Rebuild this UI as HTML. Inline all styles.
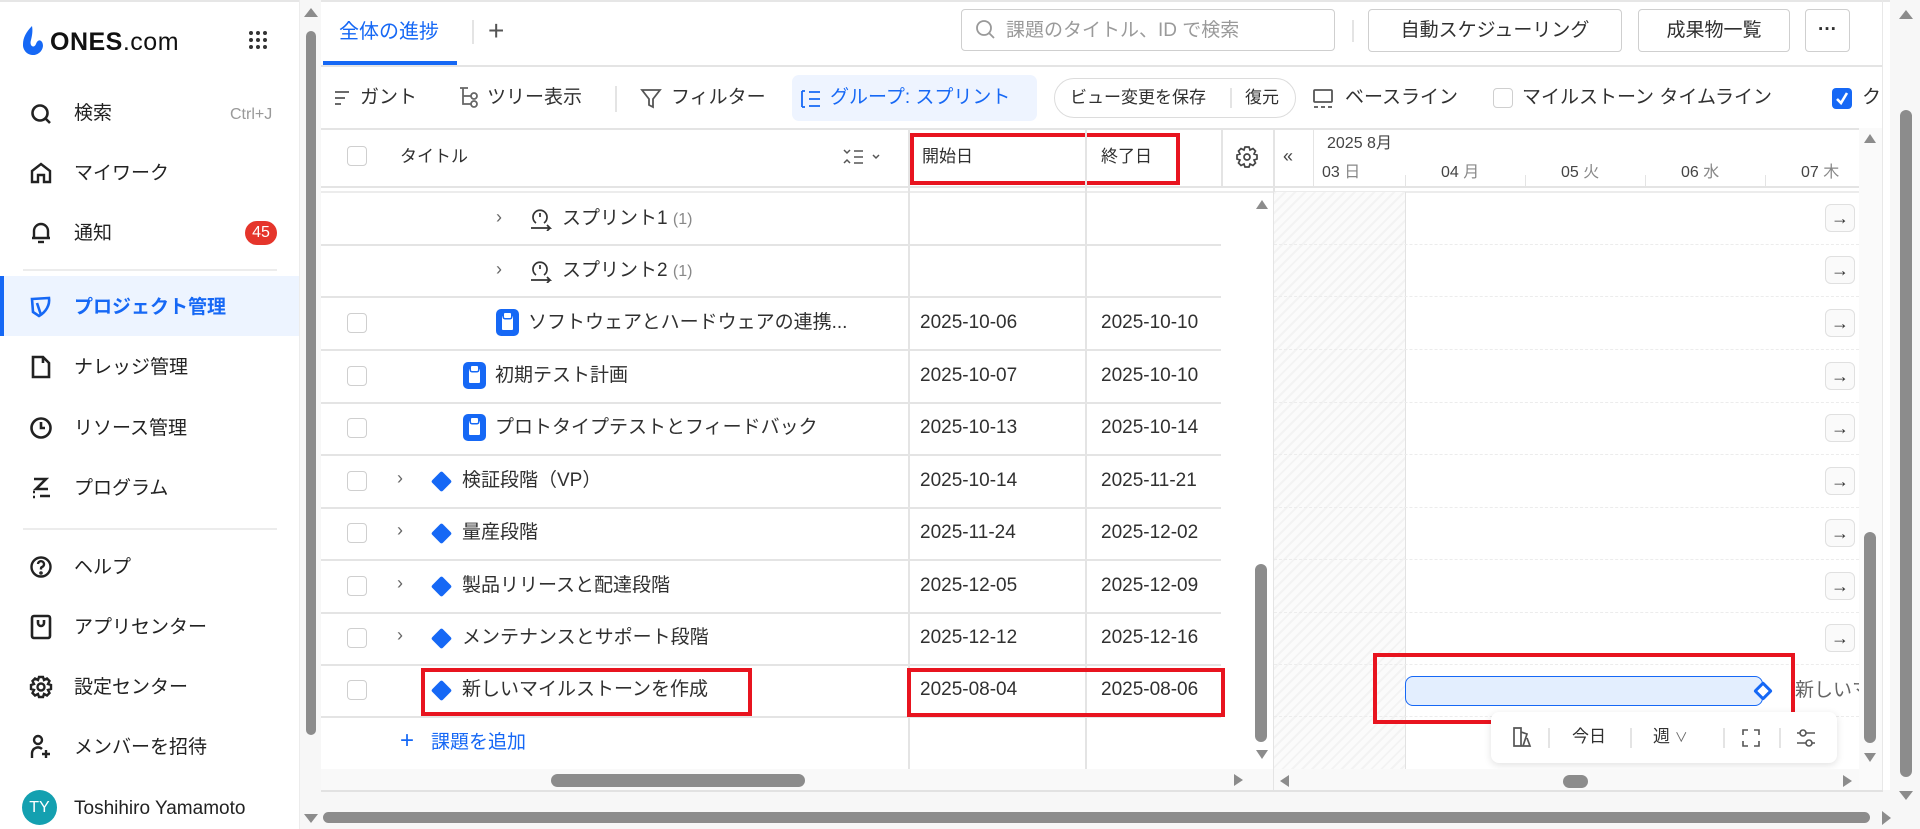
<!DOCTYPE html>
<html><head><meta charset="utf-8"><style>
*{box-sizing:border-box;margin:0;padding:0}
body{width:1920px;height:829px;overflow:hidden;background:#fff;font-family:"Liberation Sans","Noto Sans CJK JP",sans-serif;color:#303030;font-size:19px;position:relative}
.a{position:absolute;white-space:nowrap}
.t{line-height:1.2}
.cb{position:absolute;width:20px;height:20px;border:1.5px solid #cfcfcf;border-radius:4px;background:#fff}
.hl{position:absolute;height:1.5px;background:#e4e4e4}
.vl{position:absolute;width:1.5px;background:#e4e4e4}
.red{position:absolute;border:4px solid #e8141f}
.dia{position:absolute;width:15px;height:15px;background:#1668f5;transform:rotate(45deg);border-radius:2px}
.arr{position:absolute;left:1825px;width:30px;height:28px;border:1px solid #e0e0e0;border-radius:6px;background:#fafafa;text-align:center;line-height:26px;font-size:18px;color:#333}
.side .a{font-size:19px;color:#222}
.doc{position:absolute;width:23px;height:27px;background:#1668f5;border-radius:5px}
.doc:after{content:"";position:absolute;left:6px;top:7px;width:11px;height:14px;background:#fff;border-radius:1px}
.doc:before{content:"";position:absolute;left:8px;top:4px;width:7px;height:5px;background:#fff;border-radius:1px;z-index:1;box-shadow:0 0 0 1.5px #1668f5}
</style></head><body>
<div class="hl" style="left:0;top:0;width:1920px;background:#e6e6e6"></div>
<!-- sidebar -->
<div class="side">
<svg class="a" style="left:22px;top:24px" width="24" height="32" viewBox="0 0 24 32"><path d="M10 2 C4 8 1 14 1 20 a10 10 0 0 0 20 2 C21 16 16 14 14 20 C12 25 7 22 9 16 C10 12 11 7 10 2Z" fill="#1668f5"/></svg>
<div class="a t" style="left:50px;top:27px;font-size:25px;font-weight:bold;color:#111;letter-spacing:0.5px">ONES<span style="font-weight:normal">.com</span></div>
<svg class="a" style="left:248px;top:30px" width="20" height="20"><g fill="#333"><circle cx="3" cy="3" r="2"/><circle cx="10" cy="3" r="2"/><circle cx="17" cy="3" r="2"/><circle cx="3" cy="10" r="2"/><circle cx="10" cy="10" r="2"/><circle cx="17" cy="10" r="2"/><circle cx="3" cy="17" r="2"/><circle cx="10" cy="17" r="2"/><circle cx="17" cy="17" r="2"/></g></svg>
<svg class="a" style="left:30px;top:103px" width="22" height="22" fill="none" stroke="#222" stroke-width="2.6"><circle cx="10" cy="10" r="7.5"/><path d="M15 15 L20 20"/></svg>
<div class="a t" style="left:74px;top:103px">検索</div>
<div class="a t" style="left:230px;top:105px;font-size:16px;color:#999">Ctrl+J</div>
<svg class="a" style="left:30px;top:162px" width="22" height="22" fill="none" stroke="#222" stroke-width="2.4"><path d="M2 20 V9 L11 2 L20 9 V20 H14 V13 H8 V20Z"/></svg>
<div class="a t" style="left:74px;top:163px">マイワーク</div>
<svg class="a" style="left:30px;top:221px" width="22" height="24" fill="none" stroke="#222" stroke-width="2.4"><path d="M4 17 V10 a7 7 0 0 1 14 0 V17 H2 H20"/><path d="M8 21 h6"/></svg>
<div class="a t" style="left:74px;top:223px">通知</div>
<div class="a" style="left:245px;top:221px;width:32px;height:24px;border-radius:12px;background:#e5352b;color:#fff;font-size:16px;text-align:center;line-height:24px">45</div>
<div class="hl" style="left:23px;top:269px;width:254px;background:#ececec"></div>
<div class="a" style="left:0;top:276px;width:300px;height:60px;background:#edf4ff"></div>
<div class="a" style="left:0;top:276px;width:4px;height:60px;background:#1668f5"></div>
<svg class="a" style="left:29px;top:295px" width="24" height="24" fill="none" stroke="#1668f5" stroke-width="2.6"><path d="M3 4 L20 3 C21 10 17 17 10 21 L4 17Z M8 8 L12 20"/></svg>
<div class="a t" style="left:74px;top:297px;color:#1668f5;font-weight:bold">プロジェクト管理</div>
<svg class="a" style="left:31px;top:355px" width="20" height="24" fill="none" stroke="#222" stroke-width="2.6"><path d="M2 2 H12 L18 8 V22 H2Z M12 2 V8"/></svg>
<div class="a t" style="left:74px;top:357px">ナレッジ管理</div>
<svg class="a" style="left:29px;top:416px" width="24" height="24" fill="none" stroke="#222" stroke-width="2.6"><circle cx="12" cy="12" r="9.5"/><path d="M12 6 V12 H16"/></svg>
<div class="a t" style="left:74px;top:418px">リソース管理</div>
<svg class="a" style="left:30px;top:476px" width="22" height="24" fill="none" stroke="#222" stroke-width="2.6"><path d="M4 3 H16 L6 13 H18 M10 20 H20 M3 21 h2 M3 16 l2 0"/></svg>
<div class="a t" style="left:74px;top:478px">プログラム</div>
<div class="hl" style="left:23px;top:528px;width:254px;background:#ececec"></div>
<svg class="a" style="left:29px;top:555px" width="24" height="24" fill="none" stroke="#222" stroke-width="2.4"><circle cx="12" cy="12" r="9.5"/><path d="M9 9 a3 3 0 1 1 4 3 c-1 .5 -1 1 -1 2.5"/><circle cx="12" cy="18" r=".6" fill="#222"/></svg>
<div class="a t" style="left:74px;top:557px">ヘルプ</div>
<svg class="a" style="left:30px;top:614px" width="22" height="26" fill="none" stroke="#222" stroke-width="2.6"><rect x="2" y="2" width="18" height="22" rx="2"/><path d="M8 6 v3 a3 3 0 0 0 6 0 v-3"/></svg>
<div class="a t" style="left:74px;top:617px">アプリセンター</div>
<svg class="a" style="left:29px;top:675px" width="24" height="24" fill="none" stroke="#222" stroke-width="2.4"><circle cx="12" cy="12" r="3.5"/><path d="M10 2 h4 l1 3 3-1.5 2.5 2.5-1.5 3 3 1v4l-3 1 1.5 3-2.5 2.5-3-1.5-1 3h-4l-1-3-3 1.5-2.5-2.5 1.5-3-3-1v-4l3-1-1.5-3 2.5-2.5 3 1.5z"/></svg>
<div class="a t" style="left:74px;top:677px">設定センター</div>
<svg class="a" style="left:30px;top:734px" width="22" height="26" fill="none" stroke="#222" stroke-width="2.4"><circle cx="8" cy="6" r="4"/><path d="M2 24 V19 a6 6 0 0 1 10 -4 M16 16 v8 M12 20 h8"/></svg>
<div class="a t" style="left:74px;top:737px">メンバーを招待</div>
<div class="a" style="left:22px;top:790px;width:35px;height:35px;border-radius:50%;background:#14a0b0;color:#fff;font-size:16px;text-align:center;line-height:35px">TY</div>
<div class="a t" style="left:74px;top:798px;font-size:19px">Toshihiro Yamamoto</div>
</div>
<div class="vl" style="left:299px;top:0;height:829px;background:#ececec"></div>
<!-- left page scroll -->
<div class="a" style="left:300px;top:0;width:21px;height:829px;background:#f7f7f7"></div>
<div class="a" style="left:306px;top:31px;width:10px;height:704px;border-radius:5px;background:#8c8c8c"></div>
<div class="a" style="left:304px;top:8px;width:0;height:0;border-left:7px solid transparent;border-right:7px solid transparent;border-bottom:9px solid #8c8c8c"></div>
<div class="a" style="left:304px;top:814px;width:0;height:0;border-left:7px solid transparent;border-right:7px solid transparent;border-top:9px solid #8c8c8c"></div>
<!-- tabs -->
<div class="a t" style="left:339px;top:20px;color:#1668f5;font-size:20px">全体の進捗</div>
<div class="a" style="left:323px;top:61px;width:134px;height:4px;background:#1668f5"></div>
<div class="vl" style="left:472px;top:20px;height:24px"></div>
<div class="a" style="left:488px;top:14px;font-size:28px;color:#555;font-weight:300;line-height:1.2">+</div>
<div class="hl" style="left:321px;top:65px;width:1562px"></div>
<div class="a" style="left:961px;top:9px;width:374px;height:42px;border:1.5px solid #cfcfcf;border-radius:4px"></div>
<svg class="a" style="left:975px;top:19px" width="22" height="22" fill="none" stroke="#999" stroke-width="1.8"><circle cx="9" cy="9" r="7"/><path d="M14 14 l5 5"/></svg>
<div class="a t" style="left:1006px;top:20px;color:#9a9a9a">課題のタイトル、ID で検索</div>
<div class="vl" style="left:1352px;top:20px;height:22px"></div>
<div class="a" style="left:1368px;top:9px;width:254px;height:43px;border:1.5px solid #cfcfcf;border-radius:4px;text-align:center;line-height:42px">自動スケジューリング</div>
<div class="a" style="left:1638px;top:9px;width:152px;height:43px;border:1.5px solid #cfcfcf;border-radius:4px;text-align:center;line-height:42px">成果物一覧</div>
<div class="a" style="left:1805px;top:9px;width:45px;height:43px;border:1.5px solid #cfcfcf;border-radius:4px;text-align:center;line-height:40px;font-weight:bold">···</div>
<!-- toolbar -->
<svg class="a" style="left:333px;top:89px" width="18" height="18" stroke="#555" stroke-width="1.8"><path d="M2 3 h14 M2 9 h10 M2 15 h6"/></svg>
<div class="a t" style="left:360px;top:87px">ガント</div>
<svg class="a" style="left:458px;top:86px" width="24" height="24" fill="none" stroke="#666" stroke-width="1.8"><path d="M2 2 h8 M5 2 v16 h8 M5 10 h8"/><circle cx="16" cy="10" r="3"/><circle cx="16" cy="18" r="3"/></svg>
<div class="a t" style="left:487px;top:87px">ツリー表示</div>
<div class="vl" style="left:615px;top:86px;height:26px"></div>
<svg class="a" style="left:640px;top:88px" width="22" height="22" fill="none" stroke="#555" stroke-width="1.8"><path d="M2 2 H20 L13 11 V19 L9 17 V11Z"/></svg>
<div class="a t" style="left:671px;top:87px">フィルター</div>
<div class="a" style="left:792px;top:75px;width:245px;height:46px;background:#eef4ff;border-radius:7px"></div>
<svg class="a" style="left:800px;top:89px" width="22" height="20" fill="none" stroke="#1668f5" stroke-width="1.8"><path d="M2 2 v16 M2 2 h3 M2 18 h3 M9 3 h11 M9 10 h11 M9 17 h11"/></svg>
<div class="a t" style="left:830px;top:87px;color:#1668f5">グループ: スプリント</div>
<div class="a" style="left:1054px;top:78px;width:242px;height:40px;border:1.5px solid #dcdcdc;border-radius:20px"></div>
<div class="a t" style="left:1070px;top:88px;font-size:17px">ビュー変更を保存</div>
<div class="vl" style="left:1230px;top:88px;height:20px"></div>
<div class="a t" style="left:1245px;top:88px;font-size:17px">復元</div>
<svg class="a" style="left:1312px;top:88px" width="22" height="22" fill="none" stroke="#555" stroke-width="1.8"><rect x="2" y="2" width="18" height="12" rx="1"/><path d="M2 19 h4 M9 19 h4 M16 19 h4"/></svg>
<div class="a t" style="left:1345px;top:87px">ベースライン</div>
<div class="cb" style="left:1493px;top:88px"></div>
<div class="a t" style="left:1522px;top:87px">マイルストーン タイムライン</div>
<div class="a" style="left:1832px;top:88px;width:20px;height:21px;background:#1668f5;border-radius:4px"></div>
<svg class="a" style="left:1835px;top:91px" width="14" height="15" fill="none" stroke="#fff" stroke-width="2.6"><path d="M2 8 L6 12 L12 2"/></svg>
<div class="a t" style="left:1862px;top:87px">ク</div>
<div class="hl" style="left:321px;top:128px;width:1562px"></div>
<!-- header -->
<div class="cb" style="left:347px;top:146px"></div>
<div class="a t" style="left:400px;top:147px;font-size:17px">タイトル</div>
<svg class="a" style="left:843px;top:148px" width="44" height="18" fill="none" stroke="#555" stroke-width="1.5"><path d="M1 2 l3 3 3-3 M1 15 l3-3 3 3 M11 3 h9 M11 9 h9 M11 15 h9 M30 7 l3 3 3-3"/></svg>
<div class="a t" style="left:922px;top:147px;font-size:17px">開始日</div>
<div class="a t" style="left:1101px;top:147px;font-size:17px">終了日</div>
<svg class="a" style="left:1236px;top:146px" width="22" height="22" fill="none" stroke="#444" stroke-width="1.7"><circle cx="11" cy="11" r="3"/><path d="M9 1 h4 l1 3 3-1.5 2.5 2.5-1.5 3 3 1v4l-3 1 1.5 3-2.5 2.5-3-1.5-1 3h-4l-1-3-3 1.5-2.5-2.5 1.5-3-3-1v-4l3-1-1.5-3 2.5-2.5 3 1.5z"/></svg>
<div class="a t" style="left:1283px;top:146px;font-size:18px;color:#444">«</div>
<div class="a t" style="left:1327px;top:134px;font-size:16px;color:#444">2025 8月</div>
<div class="a t" style="left:1322px;top:163px;font-size:16px;color:#444">03 <span style="color:#888">日</span></div>
<div class="a t" style="left:1441px;top:163px;font-size:16px;color:#444">04 <span style="color:#888">月</span></div>
<div class="a t" style="left:1561px;top:163px;font-size:16px;color:#444">05 <span style="color:#888">火</span></div>
<div class="a t" style="left:1681px;top:163px;font-size:16px;color:#444">06 <span style="color:#888">水</span></div>
<div class="a t" style="left:1801px;top:163px;font-size:16px;color:#444">07 <span style="color:#888">木</span></div>
<div class="vl" style="left:1405px;top:175px;height:11px;width:1px"></div>
<div class="vl" style="left:1525px;top:175px;height:11px;width:1px"></div>
<div class="vl" style="left:1645px;top:175px;height:11px;width:1px"></div>
<div class="vl" style="left:1765px;top:175px;height:11px;width:1px"></div>
<div class="red" style="left:910px;top:133px;width:270px;height:52px"></div>
<div class="hl" style="left:321px;top:186px;width:1538px"></div>
<div class="hl" style="left:321px;top:191px;width:1538px;background:#ececec"></div>
<!-- columns -->
<div class="vl" style="left:908px;top:128px;height:641px"></div>
<div class="vl" style="left:1085px;top:128px;height:641px"></div>
<div class="vl" style="left:1221px;top:128px;height:58px"></div>
<div class="vl" style="left:1273px;top:128px;height:662px"></div>
<div class="a" style="left:1313px;top:128px;width:1px;height:58px;background:#e4e4e4"></div>
<!-- gantt hatch -->
<div class="a" style="left:1274px;top:192px;width:131px;height:577px;background:repeating-linear-gradient(135deg,#f3f3f3 0 2px,#fbfbfb 2px 7px)"></div>
<div class="a" style="left:1405px;top:192px;width:1px;height:577px;background:#e2e2e2"></div>
<!-- rows lines -->
<div class="hl" style="left:321px;top:244px;width:900px"></div>
<div class="hl" style="left:321px;top:296px;width:900px"></div>
<div class="hl" style="left:321px;top:349px;width:900px"></div>
<div class="hl" style="left:321px;top:402px;width:900px"></div>
<div class="hl" style="left:321px;top:454px;width:900px"></div>
<div class="hl" style="left:321px;top:507px;width:900px"></div>
<div class="hl" style="left:321px;top:559px;width:900px"></div>
<div class="hl" style="left:321px;top:612px;width:900px"></div>
<div class="hl" style="left:321px;top:664px;width:900px"></div>
<div class="hl" style="left:321px;top:716px;width:900px"></div>
<!-- gantt dashed lines -->
<div class="a" style="left:1274px;top:244px;width:585px;border-top:1px dashed #ececec"></div>
<div class="a" style="left:1274px;top:296px;width:585px;border-top:1px dashed #ececec"></div>
<div class="a" style="left:1274px;top:349px;width:585px;border-top:1px dashed #ececec"></div>
<div class="a" style="left:1274px;top:402px;width:585px;border-top:1px dashed #ececec"></div>
<div class="a" style="left:1274px;top:454px;width:585px;border-top:1px dashed #ececec"></div>
<div class="a" style="left:1274px;top:507px;width:585px;border-top:1px dashed #ececec"></div>
<div class="a" style="left:1274px;top:559px;width:585px;border-top:1px dashed #ececec"></div>
<div class="a" style="left:1274px;top:612px;width:585px;border-top:1px dashed #ececec"></div>
<div class="a" style="left:1274px;top:664px;width:585px;border-top:1px dashed #ececec"></div>
<div class="a" style="left:1274px;top:716px;width:585px;border-top:1px dashed #ececec"></div>
<!-- row 1,2 sprints -->
<div class="a t" style="left:496px;top:207px;color:#666;font-size:18px">›</div>
<svg class="a" style="left:528px;top:207px" width="26" height="24" fill="none" stroke="#333" stroke-width="1.7"><path d="M8 16 a7 7 0 1 1 8 0 M3 21 h19 l-3 -3 M22 21 l-3 3"/><path d="M12 6 v4"/></svg>
<div class="a t" style="left:562px;top:208px">スプリント1 <span style="color:#888;font-size:16px">(1)</span></div>
<div class="a t" style="left:496px;top:259px;color:#666;font-size:18px">›</div>
<svg class="a" style="left:528px;top:259px" width="26" height="24" fill="none" stroke="#333" stroke-width="1.7"><path d="M8 16 a7 7 0 1 1 8 0 M3 21 h19 l-3 -3 M22 21 l-3 3"/><path d="M12 6 v4"/></svg>
<div class="a t" style="left:562px;top:260px">スプリント2 <span style="color:#888;font-size:16px">(1)</span></div>
<!-- row3 -->
<div class="cb" style="left:347px;top:313px"></div>
<div class="doc" style="left:496px;top:309px"></div>
<div class="a t" style="left:528px;top:312px">ソフトウェアとハードウェアの連携...</div>
<div class="a t" style="left:920px;top:312px">2025-10-06</div><div class="a t" style="left:1101px;top:312px">2025-10-10</div>
<!-- row4 -->
<div class="cb" style="left:347px;top:366px"></div>
<div class="doc" style="left:463px;top:362px"></div>
<div class="a t" style="left:495px;top:365px">初期テスト計画</div>
<div class="a t" style="left:920px;top:365px">2025-10-07</div><div class="a t" style="left:1101px;top:365px">2025-10-10</div>
<!-- row5 -->
<div class="cb" style="left:347px;top:418px"></div>
<div class="doc" style="left:463px;top:414px"></div>
<div class="a t" style="left:495px;top:417px">プロトタイプテストとフィードバック</div>
<div class="a t" style="left:920px;top:417px">2025-10-13</div><div class="a t" style="left:1101px;top:417px">2025-10-14</div>
<!-- row6-9 -->
<div class="cb" style="left:347px;top:471px"></div><div class="a t" style="left:397px;top:468px;color:#666;font-size:18px">›</div><div class="dia" style="left:434px;top:474px"></div>
<div class="a t" style="left:462px;top:470px">検証段階（VP）</div>
<div class="a t" style="left:920px;top:470px">2025-10-14</div><div class="a t" style="left:1101px;top:470px">2025-11-21</div>
<div class="cb" style="left:347px;top:523px"></div><div class="a t" style="left:397px;top:520px;color:#666;font-size:18px">›</div><div class="dia" style="left:434px;top:526px"></div>
<div class="a t" style="left:462px;top:522px">量産段階</div>
<div class="a t" style="left:920px;top:522px">2025-11-24</div><div class="a t" style="left:1101px;top:522px">2025-12-02</div>
<div class="cb" style="left:347px;top:576px"></div><div class="a t" style="left:397px;top:573px;color:#666;font-size:18px">›</div><div class="dia" style="left:434px;top:579px"></div>
<div class="a t" style="left:462px;top:575px">製品リリースと配達段階</div>
<div class="a t" style="left:920px;top:575px">2025-12-05</div><div class="a t" style="left:1101px;top:575px">2025-12-09</div>
<div class="cb" style="left:347px;top:628px"></div><div class="a t" style="left:397px;top:625px;color:#666;font-size:18px">›</div><div class="dia" style="left:434px;top:631px"></div>
<div class="a t" style="left:462px;top:627px">メンテナンスとサポート段階</div>
<div class="a t" style="left:920px;top:627px">2025-12-12</div><div class="a t" style="left:1101px;top:627px">2025-12-16</div>
<!-- row10 -->
<div class="cb" style="left:347px;top:680px"></div><div class="dia" style="left:434px;top:683px"></div>
<div class="a t" style="left:462px;top:679px">新しいマイルストーンを作成</div>
<div class="a t" style="left:920px;top:679px">2025-08-04</div><div class="a t" style="left:1101px;top:679px">2025-08-06</div>
<div class="red" style="left:421px;top:668px;width:331px;height:48px"></div>
<div class="red" style="left:907px;top:668px;width:318px;height:49px"></div>
<!-- add -->
<div class="a" style="left:400px;top:727px;color:#1668f5;font-size:24px;font-weight:300;line-height:1.2">+</div>
<div class="a t" style="left:431px;top:732px;color:#1668f5">課題を追加</div>
<!-- gantt arrows -->
<div class="arr" style="top:204px">→</div><div class="arr" style="top:256px">→</div><div class="arr" style="top:309px">→</div><div class="arr" style="top:362px">→</div><div class="arr" style="top:414px">→</div><div class="arr" style="top:467px">→</div><div class="arr" style="top:519px">→</div><div class="arr" style="top:572px">→</div><div class="arr" style="top:624px">→</div>
<!-- milestone bar -->
<div class="a" style="left:1405px;top:676px;width:358px;height:30px;background:#e3eefe;border:1.5px solid #1668f5;border-radius:8px"></div>
<div class="a" style="left:1756px;top:684px;width:14px;height:14px;background:#fff;border:3.5px solid #1668f5;transform:rotate(45deg);border-radius:2px"></div>
<div class="a t" style="left:1795px;top:680px;color:#666;width:64px;overflow:hidden">新しいマ</div>
<div class="red" style="left:1373px;top:653px;width:422px;height:71px"></div>
<!-- floating toolbar -->
<div class="a" style="left:1491px;top:712px;width:346px;height:51px;background:#fff;border-radius:8px;box-shadow:0 2px 8px rgba(0,0,0,.12)"></div>
<svg class="a" style="left:1512px;top:726px" width="20" height="22" fill="none" stroke="#555" stroke-width="1.7"><path d="M2 2 h7 v18 h-7z M9 6 l6 2 -4 12 M9 20 h9 l-3 -8"/></svg>
<div class="vl" style="left:1548px;top:728px;height:20px"></div>
<div class="a t" style="left:1572px;top:727px;font-size:17px">今日</div>
<div class="vl" style="left:1630px;top:728px;height:20px"></div>
<div class="a t" style="left:1653px;top:727px;font-size:17px">週 <span style="font-size:13px;color:#666">∨</span></div>
<div class="vl" style="left:1723px;top:728px;height:20px"></div>
<svg class="a" style="left:1741px;top:728px" width="20" height="20" fill="none" stroke="#555" stroke-width="1.6"><path d="M2 7 V2 H7 M13 2 H18 V7 M18 13 V18 H13 M7 18 H2 V13"/></svg>
<div class="vl" style="left:1779px;top:728px;height:20px"></div>
<svg class="a" style="left:1795px;top:727px" width="22" height="22" fill="none" stroke="#555" stroke-width="1.6"><path d="M2 6 h18 M2 16 h18"/><circle cx="8" cy="6" r="3" fill="#fff"/><circle cx="14" cy="16" r="3" fill="#fff"/></svg>
<!-- table v scroll -->
<div class="a" style="left:1256px;top:200px;width:0;height:0;border-left:6px solid transparent;border-right:6px solid transparent;border-bottom:9px solid #8c8c8c"></div>
<div class="a" style="left:1255px;top:564px;width:12px;height:178px;border-radius:6px;background:#8c8c8c"></div>
<div class="a" style="left:1256px;top:750px;width:0;height:0;border-left:6px solid transparent;border-right:6px solid transparent;border-top:9px solid #8c8c8c"></div>
<!-- gantt v scroll -->
<div class="a" style="left:1859px;top:128px;width:23px;height:662px;background:#fafafa"></div>
<div class="a" style="left:1864px;top:134px;width:0;height:0;border-left:6px solid transparent;border-right:6px solid transparent;border-bottom:9px solid #8c8c8c"></div>
<div class="a" style="left:1864px;top:532px;width:12px;height:211px;border-radius:6px;background:#8c8c8c"></div>
<div class="a" style="left:1864px;top:753px;width:0;height:0;border-left:6px solid transparent;border-right:6px solid transparent;border-top:9px solid #8c8c8c"></div>
<!-- horizontal scrolls -->
<div class="a" style="left:321px;top:769px;width:952px;height:21px;background:#f9f9f9"></div>
<div class="a" style="left:551px;top:774px;width:254px;height:13px;border-radius:7px;background:#8c8c8c"></div>
<div class="a" style="left:1234px;top:774px;width:0;height:0;border-top:6px solid transparent;border-bottom:6px solid transparent;border-left:9px solid #8c8c8c"></div>
<div class="a" style="left:1274px;top:769px;width:585px;height:21px;background:#f9f9f9"></div>
<div class="a" style="left:1280px;top:775px;width:0;height:0;border-top:6px solid transparent;border-bottom:6px solid transparent;border-right:9px solid #8c8c8c"></div>
<div class="a" style="left:1563px;top:775px;width:25px;height:13px;border-radius:7px;background:#8c8c8c"></div>
<div class="a" style="left:1843px;top:775px;width:0;height:0;border-top:6px solid transparent;border-bottom:6px solid transparent;border-left:9px solid #8c8c8c"></div>
<div class="a" style="left:1882px;top:0;width:1px;height:790px;background:#e8e8e8"></div>
<div class="a" style="left:321px;top:790px;width:1599px;height:39px;background:#f7f7f7"></div>
<div class="hl" style="left:321px;top:790px;width:1562px;background:#e2e2e2"></div>
<div class="a" style="left:323px;top:812px;width:1547px;height:11px;border-radius:6px;background:#8c8c8c"></div>
<div class="a" style="left:1882px;top:811px;width:0;height:0;border-top:7px solid transparent;border-bottom:7px solid transparent;border-left:9px solid #8c8c8c"></div>
<!-- page right scroll -->
<div class="a" style="left:1890px;top:0;width:30px;height:790px;background:#f7f7f7"></div>
<div class="a" style="left:1899px;top:10px;width:0;height:0;border-left:7px solid transparent;border-right:7px solid transparent;border-bottom:9px solid #8c8c8c"></div>
<div class="a" style="left:1900px;top:110px;width:12px;height:667px;border-radius:6px;background:#8c8c8c"></div>
<div class="a" style="left:1899px;top:791px;width:0;height:0;border-left:7px solid transparent;border-right:7px solid transparent;border-top:9px solid #8c8c8c"></div>
</body></html>
